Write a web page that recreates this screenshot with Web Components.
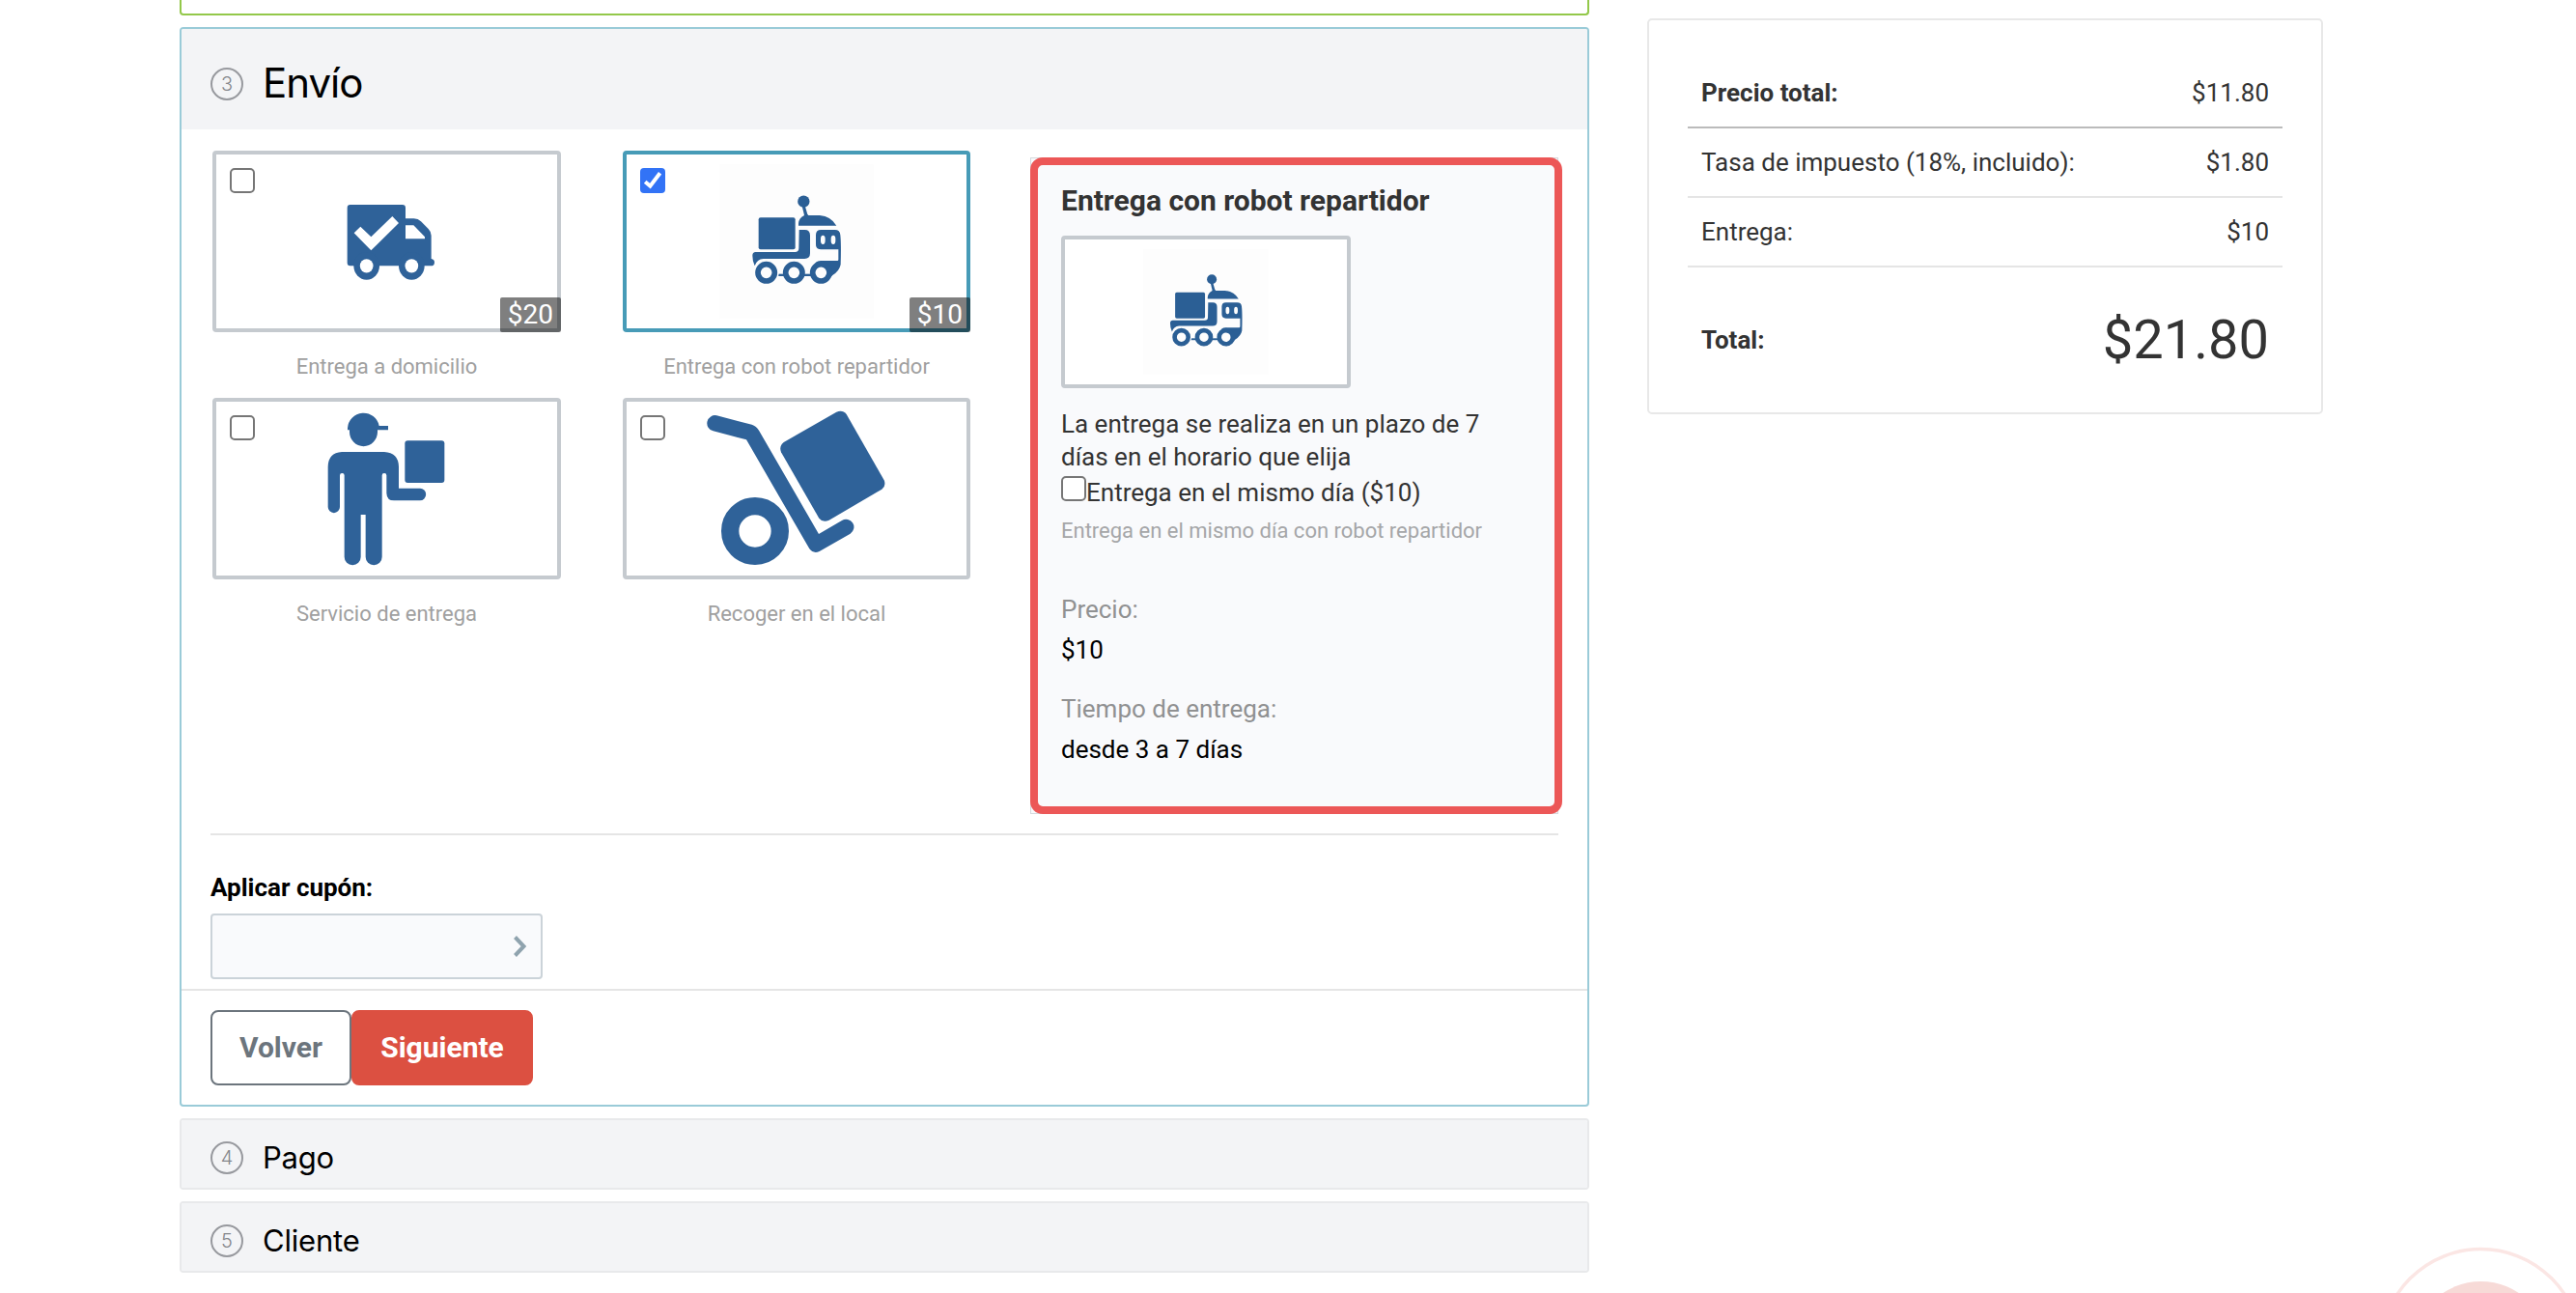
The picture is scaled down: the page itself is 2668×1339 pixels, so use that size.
<!DOCTYPE html>
<html lang="es">
<head>
<meta charset="utf-8">
<title>Envío</title>
<style>
html,body{margin:0;height:1339px;overflow:hidden;background:#fff;font-family:Roboto,"Liberation Sans",sans-serif}
</style>
</head>
<body>
<checkout-page></checkout-page>
<script>
const BLUE = '#2f6299';
const ROBOT = `
  <rect x="345" y="121" width="479" height="479" fill="#fdfdfd"/>
  <g fill="#2b5f95">
    <circle cx="607" cy="236" r="18.5"/>
    <path d="M602 250 L612 252 L621 283 L610 283 Z"/>
    <path d="M591 311 V304 Q593 286 609 279 L614 272 L622 279 H657 Q692 282 709 311 Z"/>
    <rect x="467" y="286" width="114" height="99" rx="6"/>
    <path d="M593 324 H611 Q627 324 627 341 V397 Q627 414 610 414 H482 Q462 415 455 436 Q448 422 448 404 Q448 393 458 393 H580 Q592 393 592 381 Z"/>
    <path fill-rule="evenodd" d="M661 324 H704 Q720 324 721 340 Q724 366 722 432 Q718 452 697 465 L688 474 L640 440 Q640 420 660 420 H712 Q715 420 715 416 V385 H661 Q645 385 645 369 V340 Q645 324 661 324 Z M660 352 V358 A7 11 0 0 0 674 358 V352 A7 11 0 0 0 660 352 Z M692 352 V358 A7 11 0 0 0 706 358 V352 A7 11 0 0 0 692 352 Z"/>
    <rect x="520" y="461" width="120" height="7"/>
  </g>
  <circle cx="491" cy="457" r="39" fill="#fdfdfd"/>
  <g fill="#fdfdfd" stroke="#2b5f95" stroke-width="17">
    <circle cx="491" cy="457" r="26"/><circle cx="577" cy="457" r="26"/><circle cx="661" cy="457" r="26"/>
  </g>`;
const ART = {
  truck: ['162 480 1059 540', `<g fill="${BLUE}">
    <path fill-rule="evenodd" d="M578 636 H740 Q750 636 750 646 V679 H776 Q789 679 798 688 L821 711 Q830 720 830 732 V804 Q840 806 840 815 Q840 826 829 826 H578 Q569 826 569 816 V646 Q569 636 578 636 Z M750 700 V742 H810 V736 L775 700 Z M590 724 L610 704 L643 736 L709 672 L729 693 L643 778 Z"/>
    <ellipse cx="629" cy="826" rx="40" ry="43"/><ellipse cx="769" cy="826" rx="40" ry="43"/></g>
    <ellipse cx="629" cy="826" rx="20.5" ry="21.5" fill="#fff"/><ellipse cx="769" cy="826" rx="20.5" ry="21.5" fill="#fff"/>`],
  robot: ['57 90 1056 540', ROBOT],
  robotSmall: ['46.5 84 1076 552.7', ROBOT],
  courier: ['162 78 1059 540', `<g fill="${BLUE}">
    <path d="M570 166 V160 A49.500 49.500 0 0 1 668 153 H696 V166 H663 V172 A43 44 0 0 1 576 172 V166 Z"/>
    <rect x="748" y="199" width="123" height="131" rx="9"/>
    <path d="M552 234 H684 Q728 236 729 280 V347 H795 A18.500 19 0 0 1 795 385 H714 Q692 385 691 362 V307 A7 7 0 0 0 677 307 V560 A25.500 25.500 0 0 1 626 560 V429 H611 V560 A25.500 25.500 0 0 1 560 560 V307 A7 7 0 0 0 546 307 V405 A18.500 18.500 0 0 1 509 405 V280 Q510 236 552 234 Z"/></g>`],
  dolly: ['57 78 1056 540', `<g fill="${BLUE}">
    <circle cx="456" cy="480" r="77.500" fill="none" stroke="${BLUE}" stroke-width="55"/>
    <path d="M337 121 L446 149 Q460 153 468 167 L654 489 L726 447 A24 24 0 0 1 752 488 L656 543 Q637 551 625 535 L429 196 L326 169 A24.500 24.500 0 0 1 337 121 Z"/>
    <path d="M545 204 L709 110 Q728 102 740 117 L857 322 Q864 339 850 350 L686 446 Q667 455 655 440 L537 235 Q530 216 545 204 Z"/></g>`]
};

function define(name, render) {
  customElements.define(name, class extends HTMLElement {
    connectedCallback() {
      if (this.shadowRoot) return;
      this.attachShadow({ mode: 'open' }).innerHTML = render(this);
    }
  });
}

define('line-art', el => {
  const [box, body] = ART[el.getAttribute('name')];
  return `<style>:host{display:block;width:100%;height:100%}svg{display:block;width:100%;height:100%}</style>
  <svg viewBox="${box}" preserveAspectRatio="none">${body}</svg>`;
});

define('check-box', el => `<style>
  :host{display:block;box-sizing:border-box;width:26px;height:26px;border:2px solid #767676;border-radius:5px;background:#fff;flex:none}
  :host([checked]){border:0;border-radius:4px;background:#3273f6}
  svg{display:none}
  :host([checked]) svg{display:block}
  </style><svg width="26" height="26" viewBox="0 0 26 26"><path d="M5.200 14.200 L10.400 18.700 L20.600 5.200" fill="none" stroke="#fff" stroke-width="4"/></svg>`);

define('ship-option', el => `<style>
  :host{display:block}
  .tile{position:relative;box-sizing:border-box;height:188px;border:4px solid #c5cacf;border-radius:4px}
  :host([checked]) .tile{border-color:#479bb7}
  check-box{position:absolute;left:14px;top:14px}
  .badge{position:absolute;right:-4px;bottom:-4px;height:36px;line-height:35px;padding:0 8px;border-radius:2px;background:rgba(0,0,0,.5);color:#fff;font-size:28px}
  .cap{margin-top:22px;height:27px;line-height:27px;font-size:22px;text-align:center;color:#a0a0a0}
  </style>
  <div class="tile"><line-art name="${el.getAttribute('art')}"></line-art><check-box ${el.hasAttribute('checked') ? 'checked' : ''}></check-box>
  ${el.getAttribute('price') ? `<span class="badge">${el.getAttribute('price')}</span>` : ''}</div>
  <div class="cap"><slot></slot></div>`);

define('step-title', el => `<style>
  :host{display:flex;align-items:center;box-sizing:border-box;height:70px;padding:8px 0 0 30px;gap:20px;background:#f3f4f6}
  :host([open]){height:104px;padding-top:10px}
  .n{box-sizing:border-box;width:34px;height:34px;border:2px solid #97999e;border-radius:17px;font:300 20px/30px Inter,sans-serif;text-align:center;color:#85878c}
  .t{font-family:Inter,sans-serif;font-size:31px;line-height:40px;color:#000;letter-spacing:-.2px}
  :host([open]) .t{font-size:42px;letter-spacing:-1px;padding-bottom:2px}
  </style><div class="n">${el.getAttribute('n')}</div><div class="t"><slot></slot></div>`);

define('ship-detail', el => `<style>
  :host{display:block;position:relative;box-sizing:border-box;width:547px;height:680px;border:1px solid #d5d9dd;background:#f9fafc;padding:26px 31px;font-size:26px;line-height:34px;color:#333}
  .frame{position:absolute;left:-1px;top:-1px;box-sizing:border-box;width:551px;height:680px;border:8px solid #ec5757;border-radius:13px}
  h3{margin:0;font-size:30px;line-height:36px;font-weight:700}
  .pic{box-sizing:border-box;width:300px;height:158px;margin:18px 0 20px;border:4px solid #c5cacf;border-radius:4px;background:#fff}
  p{margin:0;width:470px}
  .row{display:flex;height:39px;line-height:41px}
  check-box{margin-top:3px}
  .small{font-size:22px;line-height:27px;margin-top:7px;color:#a5a6a8}
  .k{color:#909192;margin-top:51px}
  .v{color:#000;margin-top:8px}
  .k2{margin-top:27px}
  </style>
  <h3>Entrega con robot repartidor</h3>
  <div class="pic"><line-art name="robotSmall"></line-art></div>
  <p>La entrega se realiza en un plazo de 7 días en el horario que elija</p>
  <div class="row"><check-box></check-box><span>Entrega en el mismo día ($10)</span></div>
  <div class="small">Entrega en el mismo día con robot repartidor</div>
  <div class="k">Precio:</div><div class="v">$10</div>
  <div class="k k2">Tiempo de entrega:</div><div class="v">desde 3 a 7 días</div>
  <div class="frame"></div>`);

define('coupon-field', el => `<style>
  :host{display:block;padding:37px 0 10px 30px}
  label{display:block;font-size:26px;line-height:34px;font-weight:700;color:#000}
  .in{display:flex;align-items:center;justify-content:flex-end;box-sizing:border-box;width:344px;height:68px;margin-top:10px;padding-right:14px;border:2px solid #cbd3d9;border-radius:4px;background:#f9fafc}
  </style><label>Aplicar cupón:</label><div class="in"><svg width="15" height="24" viewBox="0 0 15 24"><path d="M2.500 2.500 L11.500 12 L2.500 21.500" fill="none" stroke="#8fa3ae" stroke-width="4"/></svg></div>`);

define('step-actions', el => `<style>
  :host{display:flex;padding:20px 30px;border-top:2px solid #e5e5e5}
  button{box-sizing:border-box;height:78px;margin:0;padding:0;border:2px solid #6c757d;border-radius:8px;background:#fff;color:#6c757d;font:700 30px/74px Roboto,sans-serif;width:146px}
  .next{width:188px;border-color:#dc5041;background:#dc5041;color:#fff}
  </style><button>Volver</button><button class="next">Siguiente</button>`);

define('order-summary', el => `<style>
  :host{display:block;box-sizing:border-box;width:700px;height:410px;border:2px solid #e8e8e8;border-radius:5px;padding:38px 40px;font-size:26px;color:#333;background:#fff}
  .r{display:flex;justify-content:space-between;align-items:center;box-sizing:border-box;height:72px;padding:0 14px;border-bottom:2px solid #e5e5e5}
  .r.price{height:74px;padding-top:2px;border-color:#bbb}
  .r.total{height:150px;border:0}
  .big{font-size:56px}
  </style>
  <div class="r price"><b>Precio total:</b><span>$11.80</span></div>
  <div class="r"><span>Tasa de impuesto (18%, incluido):</span><span>$1.80</span></div>
  <div class="r"><span>Entrega:</span><span>$10</span></div>
  <div class="r total"><b>Total:</b><span class="big">$21.80</span></div>`);

define('chat-bubble', el => `<style>
  :host{position:absolute;right:0;bottom:0;width:228px;height:69px;overflow:hidden}svg{display:block}
  </style><svg width="228" height="69"><circle cx="129.500" cy="127" r="103.500" fill="none" stroke="#fbe6e4" stroke-width="3.500"/><circle cx="129.500" cy="127" r="70" fill="#f7dad7"/></svg>`);

define('checkout-page', el => `<style>
  :host{display:flex;align-items:flex-start;position:relative;box-sizing:border-box;width:2668px;height:1339px;padding-left:186px;gap:60px;overflow:hidden}
  .steps{display:flex;flex-direction:column;gap:12px;width:1460px}
  .done,.card{box-sizing:border-box;border:2px solid #93c84a;border-radius:4px}
  .done{height:16px;border-top:0;border-radius:0 0 4px 4px}
  .card{border-color:#e8e9eb;overflow:hidden}
  .card.open{height:1118px;border-color:#9acbd8}
  .body{display:flex;justify-content:space-between;box-sizing:border-box;height:731px;margin:0 30px;padding-left:2px;border-bottom:2px solid #e5e5e5}
  .grid{display:grid;grid-template-columns:361px 360px;column-gap:64px;row-gap:19px;align-content:start;padding-top:22px}
  ship-detail{margin-top:29px}
  order-summary{margin-top:19px}
  </style>
  <div class="steps">
    <div class="done"></div>
    <div class="card open">
      <step-title n="3" open>Envío</step-title>
      <div class="body">
        <div class="grid">
          <ship-option art="truck" price="$20">Entrega a domicilio</ship-option>
          <ship-option art="robot" price="$10" checked>Entrega con robot repartidor</ship-option>
          <ship-option art="courier">Servicio de entrega</ship-option>
          <ship-option art="dolly">Recoger en el local</ship-option>
        </div>
        <ship-detail></ship-detail>
      </div>
      <coupon-field></coupon-field>
      <step-actions></step-actions>
    </div>
    <div class="card"><step-title n="4">Pago</step-title></div>
    <div class="card"><step-title n="5">Cliente</step-title></div>
  </div>
  <order-summary></order-summary>
  <chat-bubble></chat-bubble>`);
</script>
</body>
</html>
